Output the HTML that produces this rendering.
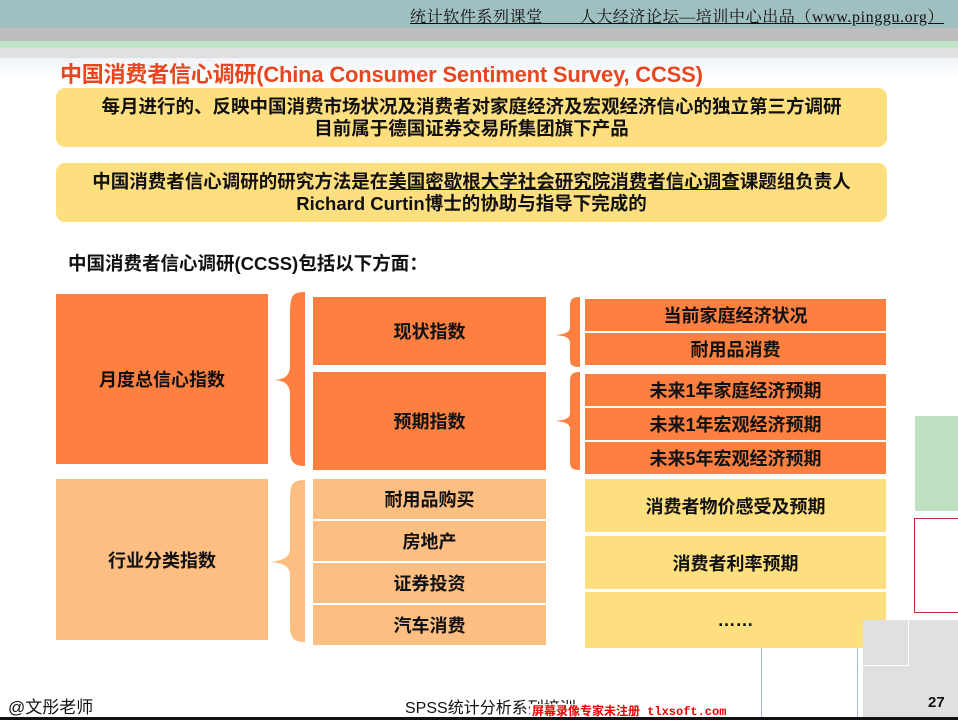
<!DOCTYPE html>
<html><head><meta charset="utf-8"><style>
body{margin:0;width:958px;height:720px;position:relative;overflow:hidden;background:#fff;font-family:"Liberation Sans","Noto Sans CJK SC",sans-serif;}
.a{position:absolute;}
.c{position:absolute;display:flex;align-items:center;justify-content:center;font-weight:bold;font-size:18px;color:#111;text-align:center;}
.o{background:#fe8040;}.lo{background:#fdbe82;}.y{background:#fedf80;}
</style></head><body>
<div class="a" style="left:0;top:0;width:958px;height:28px;background:#a0bfc1"></div>
<div class="a" style="left:410px;top:4px;font-size:16px;color:#111;text-decoration:underline;font-family:'Liberation Serif','Noto Serif CJK SC',serif;white-space:pre;letter-spacing:0.6px">统计软件系列课堂        人大经济论坛—培训中心出品（www.pinggu.org）</div>
<div class="a" style="left:0;top:28px;width:958px;height:13px;background:#bdbdbd"></div>
<div class="a" style="left:0;top:41px;width:958px;height:7px;background:#c2e4c7"></div>
<div class="a" style="left:0;top:48px;width:958px;height:10px;background:#e0e0e0"></div>
<div class="a" style="left:0;top:58px;width:958px;height:22px;background:linear-gradient(#f0f4f8,#fff)"></div>
<div class="a" style="left:60px;top:57px;font-size:22px;font-weight:bold;color:#e8461e;letter-spacing:-0.2px">中国消费者信心调研(China Consumer Sentiment Survey, CCSS)</div>
<div class="c y" style="left:56px;top:88px;width:831px;height:59px;border-radius:9px;flex-direction:column;line-height:22px;font-size:18.5px">每月进行的、反映中国消费市场状况及消费者对家庭经济及宏观经济信心的独立第三方调研<br>目前属于德国证券交易所集团旗下产品</div>
<div class="c y" style="left:56px;top:163px;width:831px;height:59px;border-radius:9px;flex-direction:column;line-height:22px;font-size:18.5px"><span>中国消费者信心调研的研究方法是在<u>美国密歇根大学社会研究院消费者信心调查</u>课题组负责人</span>Richard Curtin博士的协助与指导下完成的</div>
<div class="a" style="left:68px;top:250px;font-size:18.5px;font-weight:bold;color:#111">中国消费者信心调研(CCSS)包括以下方面：</div>

<div class="c o" style="left:56px;top:294px;width:212px;height:170px">月度总信心指数</div>
<svg class="a" style="left:268px;top:290px" width="45" height="360" viewBox="0 0 45 360">
<path d="M37 2 C22 2 22 8 22 30 L22 75 C22 88 14 90 3 90 C14 90 22 92 22 105 L22 160 C22 172 26 176 37 176 Z" fill="#fe8040"/>
<path d="M37 190 C22 190 22 196 22 215 L22 258 C22 268 14 270 3 272 C14 273 22 276 22 285 L22 336 C22 348 26 352 37 352 Z" fill="#fdbe82"/>
</svg>
<div class="c o" style="left:313px;top:297px;width:233px;height:68px">现状指数</div>
<div class="c o" style="left:313px;top:372px;width:233px;height:98px">预期指数</div>
<svg class="a" style="left:550px;top:295px" width="35" height="180" viewBox="0 0 35 180">
<path d="M30 2 C20 2 20 6 20 14 L20 32 C20 38 14 39 6 40 C14 41 20 42 20 48 L20 64 C20 70 22 72 30 72 Z" fill="#fe8040"/>
<path d="M30 77 C20 77 20 81 20 90 L20 118 C20 124 14 125 6 126 C14 127 20 128 20 134 L20 166 C20 173 22 175 30 175 Z" fill="#fe8040"/>
</svg>
<div class="c o" style="left:585px;top:299px;width:301px;height:32px">当前家庭经济状况</div>
<div class="c o" style="left:585px;top:333px;width:301px;height:32px">耐用品消费</div>
<div class="c o" style="left:585px;top:374px;width:301px;height:32px">未来1年家庭经济预期</div>
<div class="c o" style="left:585px;top:408px;width:301px;height:32px">未来1年宏观经济预期</div>
<div class="c o" style="left:585px;top:442px;width:301px;height:32px">未来5年宏观经济预期</div>

<div class="c lo" style="left:56px;top:479px;width:212px;height:161px">行业分类指数</div>
<div class="c lo" style="left:313px;top:479px;width:233px;height:40px">耐用品购买</div>
<div class="c lo" style="left:313px;top:521px;width:233px;height:40px">房地产</div>
<div class="c lo" style="left:313px;top:563px;width:233px;height:40px">证券投资</div>
<div class="c lo" style="left:313px;top:605px;width:233px;height:40px">汽车消费</div>
<div class="c y" style="left:585px;top:479px;width:301px;height:53px">消费者物价感受及预期</div>
<div class="c y" style="left:585px;top:536px;width:301px;height:53px">消费者利率预期</div>
<div class="c y" style="left:585px;top:592px;width:301px;height:56px">……</div>

<div class="a" style="left:915px;top:416px;width:43px;height:95px;background:#c0e0c2"></div>
<div class="a" style="left:914px;top:518px;width:44px;height:95px;border:1px solid #b33;border-right:none;box-sizing:border-box"></div>
<div class="a" style="left:863px;top:620px;width:95px;height:97px;background:#e0e0e0"></div>
<div class="a" style="left:863px;top:620px;width:45px;height:45px;border:1px solid #fff;border-top:none;border-left:none"></div>
<div class="a" style="left:761px;top:648px;width:1px;height:70px;background:#a8bcd8"></div>
<div class="a" style="left:857px;top:648px;width:1px;height:70px;background:#a8bcd8"></div>
<div class="a" style="left:8px;top:693px;font-size:17px;color:#111">@文彤老师</div>
<div class="a" style="left:405px;top:694px;font-size:16px;color:#111">SPSS统计分析系列培训</div>
<div class="a" style="left:928px;top:694px;font-size:15px;font-weight:bold;color:#111">27</div>
<div class="a" style="left:530px;top:704px;width:208px;height:16px;background:#fff;color:#e00;font-size:12px;font-weight:bold;font-family:'Liberation Mono','Noto Sans CJK SC',monospace;line-height:16px;padding-left:2px">屏幕录像专家未注册 tlxsoft.com</div>
<div class="a" style="left:0;top:717px;width:958px;height:3px;background:#111"></div>
</body></html>
